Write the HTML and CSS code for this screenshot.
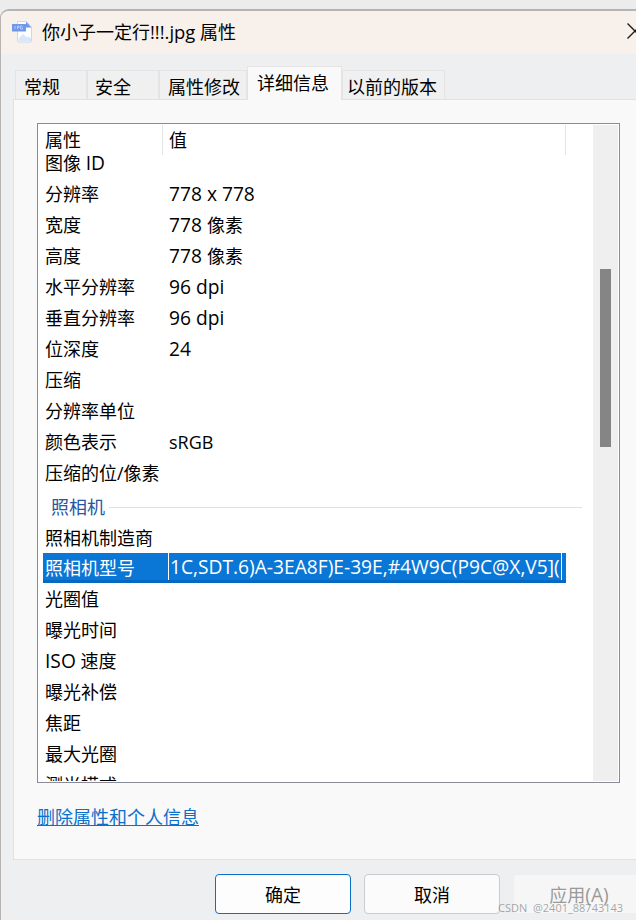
FILE: index.html
```html
<!DOCTYPE html>
<html lang="zh-CN">
<head>
<meta charset="utf-8">
<title>你小子一定行!!!.jpg 属性</title>
<link rel="stylesheet" href="styles.css">
</head>
<body>
<div class="window">
  <header class="titlebar">
    <svg class="file-icon" width="21" height="22" viewBox="0 0 21 22">
      <path d="M6.500 0.500h8.500l5.500 5.500v14a1 1 0 0 1-1 1H7.500a1 1 0 0 1-1-1z" fill="#fcfdff" stroke="#c9d8f3"/>
      <path d="M15 0.500v6h5.500z" fill="#6f98ea"/>
      <path d="M7.500 20.500v-3l4.500-4.500 4 3.500 1.500-1 2.500 2v3z" fill="#d9e7f9"/>
      <rect x="1" y="3" width="14" height="7.500" rx="0.500" fill="#6f98ea"/>
      <path d="M4 5v3M6.500 5v3M6.500 5h1.500v1.500h-1.500M11.500 5h-2v3h2v-1.500" fill="none" stroke="#cfdcf7" stroke-width="0.700"/>
    </svg>
    <span class="title">你小子一定行<span class="lat">!!!.jpg</span> 属性</span>
    <svg class="close" width="16" height="16" viewBox="0 0 16 16"><path d="M0.500 0.500L15.500 15.500M15.500 0.500L0.500 15.500" stroke="#1c1c1c" stroke-width="1.400" fill="none"/></svg>
  </header>
  <nav class="tabs">
    <div class="tab t1">常规</div>
    <div class="tab t2">安全</div>
    <div class="tab t3">属性修改</div>
    <div class="tab active">详细信息</div>
    <div class="tab t5">以前的版本</div>
  </nav>
  <section class="panel">
    <div class="listbox">
      <div class="list">
        <div class="head"><span class="hcell hname">属性</span><span class="hcell hvalue">值</span></div>
        <div class="row"><span class="k">图像 <span class="lat">ID</span></span></div>
        <div class="row"><span class="k">分辨率</span><span class="v"><span class="lat">778 x 778</span></span></div>
        <div class="row"><span class="k">宽度</span><span class="v"><span class="lat">778 </span>像素</span></div>
        <div class="row"><span class="k">高度</span><span class="v"><span class="lat">778 </span>像素</span></div>
        <div class="row"><span class="k">水平分辨率</span><span class="v"><span class="lat">96 dpi</span></span></div>
        <div class="row"><span class="k">垂直分辨率</span><span class="v"><span class="lat">96 dpi</span></span></div>
        <div class="row"><span class="k">位深度</span><span class="v"><span class="lat">24</span></span></div>
        <div class="row"><span class="k">压缩</span></div>
        <div class="row"><span class="k">分辨率单位</span></div>
        <div class="row"><span class="k">颜色表示</span><span class="v">sRGB</span></div>
        <div class="row"><span class="k">压缩的位/像素</span></div>
        <div class="group"><span class="gname">照相机</span><span class="gline"></span></div>
        <div class="row"><span class="k">照相机制造商</span></div>
        <div class="row selected"><span class="k">照相机型号</span><span class="v edit"><span class="lat">1C,SDT.6)A-3EA8F)E-39E,#4W9C(P9C@X,V5](</span></span></div>
        <div class="row"><span class="k">光圈值</span></div>
        <div class="row"><span class="k">曝光时间</span></div>
        <div class="row"><span class="k"><span class="lat">ISO</span> 速度</span></div>
        <div class="row"><span class="k">曝光补偿</span></div>
        <div class="row"><span class="k">焦距</span></div>
        <div class="row"><span class="k">最大光圈</span></div>
        <div class="row"><span class="k">测光模式</span></div>
      </div>
      <div class="track"><div class="thumb"></div></div>
    </div>
    <a class="link" href="#">删除属性和个人信息</a>
  </section>
  <footer class="footer">
    <button class="btn primary">确定</button>
    <button class="btn">取消</button>
    <button class="btn disabled">应用<span class="lat">(A)</span></button>
  </footer>
</div>
<div class="watermark">CSDN  @2401_88743143</div>
</body>
</html>
```
FILE: styles.css
```css
* { box-sizing: border-box; }
html, body { margin: 0; height: 100%; overflow: hidden; }
body {
  background: #ececec;
  font-family: "Open Sans", "Noto Sans CJK SC", sans-serif;
  font-size: 18px;
  color: #000;
  position: relative;
}
.lat { font-size: 19.2px; line-height: 1; }
.title .lat { font-size: 18.4px; }
.window {
  width: 670px;
  height: 960px;
  margin-top: 9px;
  border-top: 2px solid #b6b3b1;
  border-left: 1px solid #b6b3b1;
  border-top-left-radius: 9px;
  background: #eeeff0;
  overflow: hidden;
}
.titlebar {
  height: 43px;
  background: #f8f0eb;
  display: flex;
  align-items: center;
  padding-left: 10px;
  position: relative;
}
.file-icon { flex: none; margin-bottom: 2px; }
.title { margin-left: 10px; line-height: 43px; }
.close { position: absolute; left: 626px; top: 12px; }
.tabs {
  height: 45px;
  display: flex;
  align-items: flex-end;
  padding-left: 14px;
}
.tab {
  height: 29px;
  background: #f0f0f0;
  border: 1px solid #e4e4e4;
  border-bottom: none;
  padding: 0 0 0 8px;
  line-height: 33px;
  white-space: nowrap;
}
.t1 { width: 72px; }
.t2 { width: 72px; padding-left: 7px; }
.t3 { width: 88px; }
.t5 { width: 103px; padding-left: 4px; }
.active {
  height: 34px;
  width: 95px;
  background: #f9f9f9;
  line-height: 33px;
  padding: 0 0 0 9px;
  position: relative;
  z-index: 1;
  margin-bottom: -1px;
}
.panel {
  width: 650px;
  height: 761px;
  margin-left: 12px;
  background: #f9f9f9;
  border: 1px solid #e2e2e2;
  padding: 23px 0 0 23px;
}
.listbox {
  width: 583px;
  height: 660px;
  background: #fff;
  border: 1px solid #8b8b98;
  padding: 1px 1px 1px 0;
  display: flex;
}
.list { flex: 1; min-width: 0; overflow: hidden; }
.head { height: 23px; display: flex; position: relative; line-height: 31px; }
.hcell { display: block; position: relative; }
.hname { width: 124px; padding-left: 7px; }
.hvalue { padding-left: 7px; }
.hname::after {
  content: "";
  position: absolute;
  left: 124px;
  top: 0;
  width: 1px;
  height: 30px;
  background: #e3e3e3;
}
.head::after {
  content: "";
  position: absolute;
  left: 527px;
  top: 0;
  width: 1px;
  height: 30px;
  background: #e3e3e3;
}
.row {
  height: 31px;
  line-height: 31px;
  display: flex;
  width: 523px;
  margin-left: 5px;
  padding-left: 2px;
  white-space: nowrap;
}
.k { width: 124px; flex: none; }
.v { flex: 1; min-width: 0; overflow: hidden; }
.group {
  height: 31px;
  margin-top: 3px;
  display: flex;
  align-items: center;
  padding-left: 13px;
  color: #2a559f;
  line-height: 31px;
}
.gname { flex: none; }
.gline { width: 473px; height: 1px; margin-left: 4px; background: #d7e2ee; }
.selected {
  height: 30px;
  line-height: 30px;
  margin: -1px 0 1px 5px;
  background: linear-gradient(#0a76d6 27px, #0568c2 27px);
  color: #fff;
}
.edit {
  height: 27px;
  margin: 0 5px 3px -1px;
  padding-left: 1px;
  line-height: 29px;
  border-left: 1px solid #fff;
  border-right: 1px solid #fff;
  flex: none;
  width: 394px;
}
.track {
  width: 25px;
  flex: none;
  background: #efefef;
  padding-top: 144px;
}
.thumb { width: 11px; height: 178px; margin-left: 7px; background: #858585; }
.link {
  display: block;
  width: 162px;
  margin-top: 22px;
  color: #0c6fc8;
  white-space: nowrap;
  line-height: 25px;
  text-decoration: underline;
}
.footer {
  display: flex;
  gap: 13px;
  padding: 14px 0 0 214px;
}
.btn {
  width: 136px;
  height: 40px;
  flex: none;
  border: 1px solid #ccc;
  border-radius: 4px;
  background: #fbfbfb;
  font: inherit;
  color: #000;
  padding: 0;
}
.primary { border-color: #0a6fc9; background: #fdfdfd; }
.disabled { border-color: #eeeeee; background: #f6f6f6; color: #9a9a9a; padding-right: 4px; }
.watermark {
  position: absolute;
  left: 498px;
  top: 900px;
  font-size: 11px;
  line-height: 16px;
  color: rgba(130, 130, 130, 0.7);
  white-space: pre;
}
```
